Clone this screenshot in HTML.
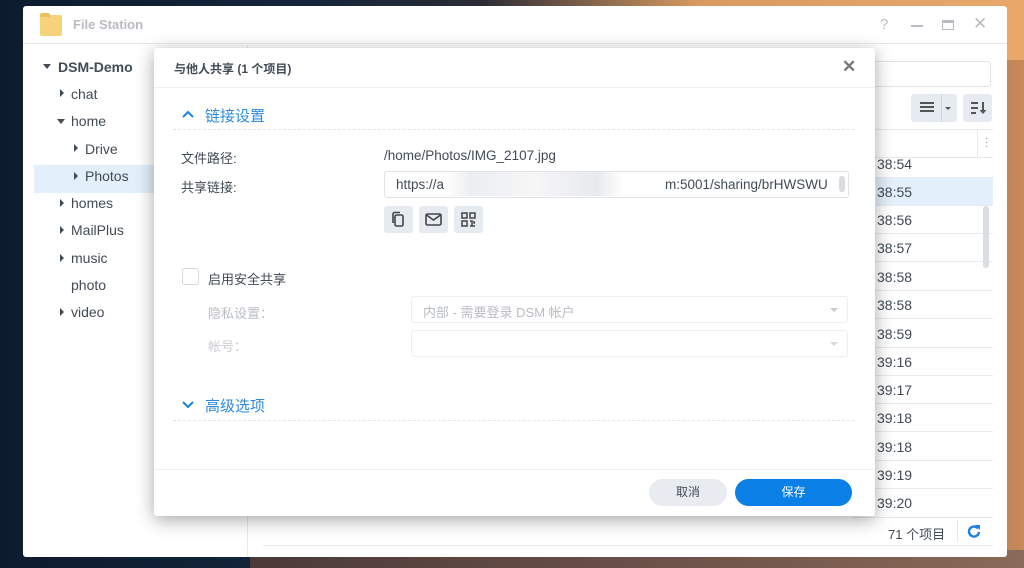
<!DOCTYPE html>
<html><head><meta charset="utf-8"><style>
*{margin:0;padding:0;box-sizing:border-box}
body{width:1024px;height:568px;overflow:hidden;position:relative;font-family:"Liberation Sans","Noto Sans CJK SC",sans-serif;background:linear-gradient(90deg,#0d1b2e 0%,#14263a 30%,#3a3030 60%,#7a5040 80%,#c98a5a 100%)}
.bgtop{position:absolute;left:480px;top:0;width:544px;height:60px;background:linear-gradient(90deg,#2a2a35,#d89a60 40%,#e8a86a)}
.bgbot{position:absolute;left:250px;top:550px;width:774px;height:18px;background:linear-gradient(90deg,#4a3a38,#6a5048,#8a6a58)}
.win{position:absolute;left:23px;top:6px;width:984px;height:551px;background:#fff;border-radius:3px;overflow:hidden}
.tb{height:38px;border-bottom:1px solid #e6e9ee;position:relative}
.tb .t{position:absolute;left:50px;top:11px;font-size:13px;font-weight:bold;color:#b9bcc2}
.side{position:absolute;left:0;top:39px;width:225px;bottom:0;border-right:1px solid #e6e9ee}
.it{position:absolute;font-size:14px;color:#414b55}
.tri{position:absolute;width:0;height:0}
.dlg{position:absolute;left:154px;top:48px;width:721px;height:468px;background:#fff;border-radius:3px;box-shadow:0 4px 18px rgba(0,0,0,.35)}
.row{position:absolute;left:853px;width:140px;height:28px;border-bottom:1px solid #e8ebef;font-size:14px;color:#414b55;padding-left:24px;line-height:28px}
.lbl{position:absolute;font-size:13px;color:#414b55}
.ib{position:absolute;top:158px;width:29px;height:27px;background:#e6ebf2;border-radius:3px}
</style></head><body>
<div class="bgtop"></div><div class="bgbot"></div>
<div class="win">
 <div class="tb">
  <div style="position:absolute;left:17px;top:9px;width:22px;height:21px;background:#f6d27c;border-radius:2px"></div>
  <div style="position:absolute;left:17px;top:7px;width:10px;height:4px;background:#eec060;border-radius:2px 2px 0 0"></div>
  <div class="t">File Station</div>
  <div style="position:absolute;left:857px;top:10px;font-size:15px;color:#b7bbc2">?</div>
  <div style="position:absolute;left:888px;top:19px;width:12px;height:2px;background:#b7bbc2"></div>
  <div style="position:absolute;left:919px;top:14px;width:12px;height:10px;border:1.5px solid #b7bbc2;border-top-width:3px"></div>
  <div style="position:absolute;left:950px;top:8px;font-size:17px;color:#b7bbc2">✕</div>
 </div>
 <div class="side">
  <div style="position:absolute;left:11px;top:120px;width:214px;height:28px;background:#e3effb"></div>
 </div>
 <div style="position:absolute;left:830px;top:55px;width:138px;height:26px;border:1px solid #dfe3e8;border-radius:3px"></div>
 <div style="position:absolute;left:888px;top:88px;width:46px;height:28px;background:#e6ebf2;border-radius:3px"></div>
 <div style="position:absolute;left:918px;top:88px;width:1px;height:28px;background:#cfd5dd"></div>
 <div style="position:absolute;left:897px;top:96px;width:14px;height:2px;background:#555;box-shadow:0 4px 0 #555,0 8px 0 #555"></div>
 <div class="tri" style="left:922px;top:101px;border:3px solid transparent;border-top:3px solid #555"></div>
 <div style="position:absolute;left:940px;top:88px;width:29px;height:28px;background:#e6ebf2;border-radius:3px"><svg width="29" height="28"><g stroke="#555" stroke-width="2"><path d="M8 9h7M8 14h7M8 19h5"/><path d="M20 8v11"/></g><path d="M16.5 16h7l-3.5 4z" fill="#555"/></svg></div>
 <div style="position:absolute;left:830px;top:123px;width:140px;height:1px;background:#e6e9ee"></div>
 <div style="position:absolute;left:830px;top:151px;width:140px;height:1px;background:#e6e9ee"></div>
 <div style="position:absolute;left:954px;top:124px;width:1px;height:27px;background:#e6e9ee"></div>
 <div style="position:absolute;left:962px;top:131px;font-size:10px;color:#888;line-height:4px">·<br>·<br>·</div>
 <div style="position:absolute;left:853px;top:172px;width:117px;height:28px;background:#e3effb"></div>
 <div style="position:absolute;left:830px;top:511px;width:140px;height:1px;background:#e6e9ee"></div>
 <div style="position:absolute;left:240px;top:539px;width:730px;height:1px;background:#e6e9ee"></div>
 <div style="position:absolute;left:865px;top:518px;font-size:13px;color:#414b55">71 个项目</div>
 <div style="position:absolute;left:934px;top:514px;width:1px;height:22px;background:#e6e9ee"></div>
 <svg style="position:absolute;left:944px;top:518px" width="14" height="14"><path d="M11 4.5A5 5 0 1 0 12 8" stroke="#1a82e2" stroke-width="2.4" fill="none"/><path d="M8 1h5v5z" fill="#1a82e2"/></svg>
</div>
<div class="tri" style="left:43px;top:64px;border:4px solid transparent;border-top:5px solid #414b55"></div>
<div class="it" style="left:58px;top:59px;font-weight:bold;font-size:14px">DSM-Demo</div>
<div class="tri" style="left:60px;top:89px;border:4px solid transparent;border-left:4px solid #414b55"></div>
<div class="it" style="left:71px;top:86px">chat</div>
<div class="tri" style="left:57px;top:119px;border:4px solid transparent;border-top:5px solid #414b55"></div>
<div class="it" style="left:71px;top:113px">home</div>
<div class="tri" style="left:74px;top:144px;border:4px solid transparent;border-left:4px solid #414b55"></div>
<div class="it" style="left:85px;top:141px">Drive</div>
<div class="tri" style="left:74px;top:172px;border:4px solid transparent;border-left:4px solid #414b55"></div>
<div class="it" style="left:85px;top:168px">Photos</div>
<div class="tri" style="left:60px;top:199px;border:4px solid transparent;border-left:4px solid #414b55"></div>
<div class="it" style="left:71px;top:195px">homes</div>
<div class="tri" style="left:60px;top:226px;border:4px solid transparent;border-left:4px solid #414b55"></div>
<div class="it" style="left:71px;top:222px">MailPlus</div>
<div class="tri" style="left:60px;top:254px;border:4px solid transparent;border-left:4px solid #414b55"></div>
<div class="it" style="left:71px;top:250px">music</div>
<div class="it" style="left:71px;top:277px">photo</div>
<div class="tri" style="left:60px;top:308px;border:4px solid transparent;border-left:4px solid #414b55"></div>
<div class="it" style="left:71px;top:304px">video</div>
<div class="row" style="top:150px">38:54</div>
<div class="row" style="top:178px">38:55</div>
<div class="row" style="top:206px">38:56</div>
<div class="row" style="top:234px">38:57</div>
<div class="row" style="top:263px">38:58</div>
<div class="row" style="top:291px">38:58</div>
<div class="row" style="top:320px">38:59</div>
<div class="row" style="top:348px">39:16</div>
<div class="row" style="top:376px">39:17</div>
<div class="row" style="top:404px">39:18</div>
<div class="row" style="top:433px">39:18</div>
<div class="row" style="top:461px">39:19</div>
<div class="row" style="top:489px;border:none">39:20</div>
<div style="position:absolute;left:983px;top:206px;width:6px;height:62px;background:#dadde2;border-radius:3px"></div>
<div class="dlg">
 <div style="position:absolute;left:20px;top:12px;font-size:12px;font-weight:bold;color:#414b55">与他人共享 (1 个项目)</div>
 <div style="position:absolute;left:688px;top:9px;font-size:17px;color:#777;font-weight:bold">✕</div>
 <div style="position:absolute;left:0;top:39px;width:721px;height:1px;background:#eef0f3"></div>
 <svg style="position:absolute;left:28px;top:62px" width="12" height="8"><path d="M1 7L6 2L11 7" stroke="#1a82e2" stroke-width="2" fill="none"/></svg>
 <div style="position:absolute;left:51px;top:57px;font-size:15px;color:#2e8ae0">链接设置</div>
 <div style="position:absolute;left:19px;top:81px;width:682px;border-top:1px dashed #e2e5e9"></div>
 <div class="lbl" style="left:27px;top:100px">文件路径:</div>
 <div class="lbl" style="left:230px;top:100px;font-size:13.5px">/home/Photos/IMG_2107.jpg</div>
 <div class="lbl" style="left:27px;top:129px">共享链接:</div>
 <div style="position:absolute;left:230px;top:123px;width:465px;height:27px;border:1px solid #dfe3e8;border-radius:3px"></div>
 <div class="lbl" style="left:242px;top:129px;font-size:13.5px">https://a</div>
 <div style="position:absolute;left:290px;top:124px;width:180px;height:24px;background:linear-gradient(90deg,#fff,#eceef0 15%,#f6f6f7 50%,#e8eaec 85%,#fff)"></div>
 <div class="lbl" style="left:511px;top:129px;font-size:13.5px">m:5001/sharing/brHWSWU</div>
 <div style="position:absolute;left:685px;top:128px;width:6px;height:16px;background:#d8dbe0;border-radius:3px"></div>
 <div class="ib" style="left:230px"><svg width="29" height="27"><rect x="11" y="9" width="8" height="11" rx="1.5" stroke="#444" stroke-width="1.6" fill="none"/><path d="M9 17V8a1.5 1.5 0 0 1 1.5-1.5H16" stroke="#444" stroke-width="1.6" fill="none"/></svg></div>
 <div class="ib" style="left:265px"><svg width="29" height="27"><rect x="7" y="8" width="15" height="11" rx="1.5" stroke="#444" stroke-width="1.6" fill="none"/><path d="M7.5 9L14.5 14L21.5 9" stroke="#444" stroke-width="1.6" fill="none"/></svg></div>
 <div class="ib" style="left:300px"><svg width="29" height="27"><g stroke="#444" stroke-width="1.5" fill="none"><rect x="8" y="7" width="5" height="5"/><rect x="16" y="7" width="5" height="5"/><rect x="8" y="15" width="5" height="5"/><path d="M16 15h2v5M20 15v2h1M16 20h5"/></g></svg></div>
 <div style="position:absolute;left:28px;top:220px;width:17px;height:17px;border:1px solid #d5d9df;border-radius:3px"></div>
 <div class="lbl" style="left:54px;top:221px">启用安全共享</div>
 <div class="lbl" style="left:54px;top:255px;color:#b9bdc3">隐私设置：</div>
 <div style="position:absolute;left:257px;top:248px;width:437px;height:27px;border:1px solid #eceef1;border-radius:3px"></div>
 <div class="lbl" style="left:269px;top:254px;color:#b9bdc3">内部 - 需要登录 DSM 帐户</div>
 <div class="tri" style="left:676px;top:260px;border:4px solid transparent;border-top:4px solid #c9ccd1"></div>
 <div class="lbl" style="left:54px;top:288px;color:#c9ccd1">帐号：</div>
 <div style="position:absolute;left:257px;top:282px;width:437px;height:27px;border:1px solid #eceef1;border-radius:3px"></div>
 <div class="tri" style="left:676px;top:294px;border:4px solid transparent;border-top:4px solid #d5d8dc"></div>
 <svg style="position:absolute;left:28px;top:353px" width="12" height="8"><path d="M1 1L6 6L11 1" stroke="#1a82e2" stroke-width="2" fill="none"/></svg>
 <div style="position:absolute;left:51px;top:347px;font-size:15px;color:#2e8ae0">高级选项</div>
 <div style="position:absolute;left:19px;top:372px;width:682px;border-top:1px dashed #e2e5e9"></div>
 <div style="position:absolute;left:0;top:421px;width:721px;height:1px;background:#eef0f3"></div>
 <div style="position:absolute;left:495px;top:431px;width:78px;height:27px;background:#e8ecf1;border-radius:14px;font-size:12px;color:#414b55;text-align:center;line-height:27px">取消</div>
 <div style="position:absolute;left:581px;top:431px;width:117px;height:27px;background:#0a7fe6;border-radius:14px;font-size:12px;color:#fff;text-align:center;line-height:27px">保存</div>
</div>
</body></html>
